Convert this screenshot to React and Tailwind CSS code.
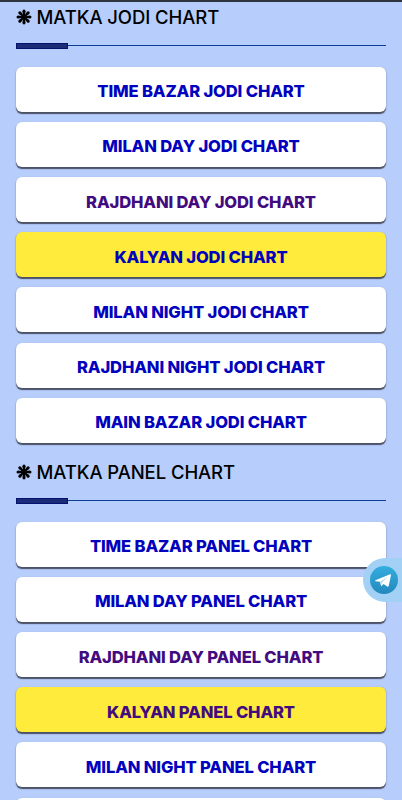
const jodi = [
  { label: "TIME BAZAR JODI CHART" },
  { label: "MILAN DAY JODI CHART" },
  { label: "RAJDHANI DAY JODI CHART", visited: true },
  { label: "KALYAN JODI CHART", featured: true },
  { label: "MILAN NIGHT JODI CHART" },
  { label: "RAJDHANI NIGHT JODI CHART" },
  { label: "MAIN BAZAR JODI CHART" },
];

const panel = [
  { label: "TIME BAZAR PANEL CHART" },
  { label: "MILAN DAY PANEL CHART" },
  { label: "RAJDHANI DAY PANEL CHART", visited: true },
  { label: "KALYAN PANEL CHART", featured: true, visited: true },
  { label: "MILAN NIGHT PANEL CHART" },
  { label: "" },
];

function Asterisk() {
  return (
    <svg className="mb-[2px] h-4 w-4 shrink-0" viewBox="-8 -8 16 16" aria-hidden="true">
      {[0, 45, 90, 135, 180, 225, 270, 315].map((a) => (
        <path key={a} d="M-0.6 0L-1.6 -5.8Q-1.5 -7.5 0 -7.5Q1.5 -7.5 1.6 -5.8L0.6 0Z" transform={`rotate(${a})`} />
      ))}
      <circle r="2.3" />
    </svg>
  );
}

function Section({ title, items }) {
  return (
    <section className="h-[455px]">
      <h2 className="flex h-[30px] items-center gap-[4.5px] text-[18.5px] font-medium tracking-[-0.08px] text-black">
        <Asterisk />
        <span className="whitespace-nowrap">{title}</span>
      </h2>
      <div className="mt-[10px] flex h-[6px] items-start">
        <div className="h-[6px] w-[52px] border border-[#06126c] bg-[#1b2b78]" />
        <div className="mt-[2px] h-px flex-1 bg-[#0c3b94]" />
      </div>
      <ul className="mt-[17.6px] flex flex-col gap-[10.2px]">
        {items.map((item, i) => (
          <li key={i}>
            <a
              className={`flex h-[45px] items-center justify-center rounded-[6px] pt-[5px] text-[16.6px] font-extrabold tracking-[-0.15px] whitespace-nowrap shadow-[0_1.5px_1px_#4b5266,0_1px_3px_#0000001f] ${
                item.featured ? "bg-[#ffeb3b]" : "bg-white"
              } ${item.visited ? "text-[#430b80]" : "text-[#0202be]"}`}
            >
              {item.label && <span>{item.label}</span>}
            </a>
          </li>
        ))}
      </ul>
    </section>
  );
}

export default function App() {
  return (
    <main className="relative h-[800px] w-[402px] overflow-hidden bg-[#b7cdfb] font-['Inter','Liberation_Sans',sans-serif]">
      <div className="h-[2px] bg-[#30343e]" />
      <div className="px-4 pt-px">
        <Section title="MATKA JODI CHART" items={jodi} />
        <Section title="MATKA PANEL CHART" items={panel} />
      </div>
      <div className="absolute top-[558px] right-0 flex h-[44px] w-[39px] items-center rounded-l-full bg-[#a3d1f5] pl-[7px]">
        <svg className="h-[28px] w-[28px] shrink-0" viewBox="0 0 28 28" aria-label="Telegram">
          <defs>
            <linearGradient id="tg" x1="0" y1="0" x2="0" y2="1">
              <stop offset="0" stopColor="#35addf" />
              <stop offset="1" stopColor="#2488bd" />
            </linearGradient>
          </defs>
          <circle cx="14" cy="14" r="14" fill="url(#tg)" />
          <path d="M5.4 14.2L20.1 8.2Q21.2 7.9 21 9.1L18.7 20.1Q18.3 21.3 17.2 20.6L13.6 17.9L11.8 19.7Q11.2 20.2 11 19.4L9.8 15.7L5.5 15.2Q4.8 14.6 5.4 14.2Z" fill="#fff" />
          <path d="M10 15.7L17.7 10.8L12.1 16.4L11.5 19.3Z" fill="#b9d9eb" />
        </svg>
      </div>
    </main>
  );
}
